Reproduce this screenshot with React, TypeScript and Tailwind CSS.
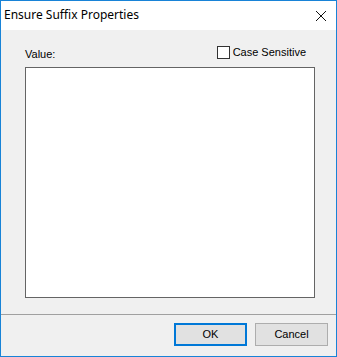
export default function App() {
  return (
    <div className="w-[337px] h-[357px] flex flex-col bg-[#f0f0f0] border-x border-b border-[#1883d7] border-t border-t-[#1883d7] overflow-hidden">
      {/* Title bar */}
      <div className="h-[29px] flex-none bg-white flex items-center justify-between pl-[3px] pr-[8px]">
        <span className="text-[12px] leading-[16px] text-black font-['Noto_Sans',sans-serif] pb-[1px]">
          Ensure Suffix Properties
        </span>
        <svg width="12" height="12" viewBox="0 0 12 12" className="mr-[1px] mt-[1px]">
          <path d="M1 1 L11 11 M11 1 L1 11" stroke="#111" strokeWidth="1" fill="none" />
        </svg>
      </div>

      {/* Body */}
      <div className="flex-1 flex flex-col font-['Liberation_Sans',Arial,sans-serif] text-[11px] text-black">
        <div className="pt-[15px] pl-[24px] pr-[21px]">
          <div className="flex items-center justify-between h-[15px]">
            <span className="leading-[15px] pt-[4px]">Value:</span>
            <label className="flex items-center gap-[3px] mr-[9px]">
              <span className="w-[13px] h-[13px] border border-[#333] bg-white" />
              <span className="leading-[15px]">Case Sensitive</span>
            </label>
          </div>
          <div className="mt-[7px] h-[231px] bg-white border border-[#646464]" />
        </div>

        <div className="mt-[16px] border-t border-[#a0a0a0]" />

        <div className="flex justify-end gap-[8px] pt-[8px] pr-[8px]">
          <button className="w-[73px] h-[23px] bg-[#e1e1e1] border-2 border-[#0078d7] leading-none">
            OK
          </button>
          <button className="w-[73px] h-[23px] bg-[#e1e1e1] border border-[#adadad] leading-none">
            Cancel
          </button>
        </div>
      </div>
    </div>
  );
}
